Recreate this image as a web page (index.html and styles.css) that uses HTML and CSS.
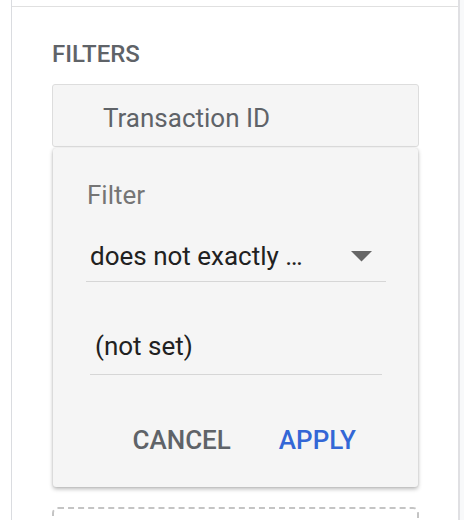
FILE: index.html
```html
<!DOCTYPE html>
<html>
<head>
<meta charset="utf-8">
<link rel="stylesheet" href="styles.css">
</head>
<body>
<div class="page">
  <div class="gutter"></div>
  <div class="panel">
    <div class="prev"></div>
    <div class="content">
      <div class="title">FILTERS</div>
      <div class="field">Transaction ID</div>
      <div class="card">
        <div class="label">Filter</div>
        <div class="select">
          <span class="select-text">does not exactly …</span>
          <svg class="caret" width="21" height="11" viewBox="0 0 21 11"><polygon points="0,0 21,0 10.5,10.5" fill="#666666"/></svg>
        </div>
        <div class="input">(not set)</div>
        <div class="actions">
          <span class="btn cancel">CANCEL</span>
          <span class="btn apply">APPLY</span>
        </div>
      </div>
      <div class="dashed"></div>
    </div>
  </div>
  <div class="side"></div>
</div>
</body>
</html>
```
FILE: styles.css
```css
html, body {
  margin: 0;
  padding: 0;
  background: #ffffff;
  font-family: Roboto, "Noto Sans", Arial, sans-serif;
  overflow: hidden;
}
.page {
  display: flex;
  height: 520px;
  overflow: hidden;
}
.gutter {
  width: 11px;
  flex: none;
  background: #ffffff;
}
.panel {
  width: 446px;
  flex: none;
  border-left: 1px solid #dadce0;
  border-right: 2px solid #e0e0e3;
  display: flex;
  flex-direction: column;
}
.side {
  flex: 1;
  background: #f8f9fa;
}
.prev {
  flex: none;
  height: 6px;
  border-bottom: 1px solid #e0e0e0;
}
.content {
  flex: none;
  padding: 33px 39px 0 40px;
  display: flex;
  flex-direction: column;
}
.title {
  font-size: 24px;
  font-weight: 500;
  line-height: 28px;
  color: #5f6368;
}
.field {
  margin-top: 16px;
  height: 63px;
  box-sizing: border-box;
  border: 1px solid #dddddd;
  border-radius: 3px;
  background: #f5f5f5;
  padding: 18px 0 0 50px;
  font-size: 26px;
  line-height: 30px;
  color: #5f6368;
}
.card {
  margin: 1px 1px 0 1px;
  background: #f5f5f5;
  border-radius: 3px;
  box-shadow: 0 2px 4px rgba(0,0,0,0.28), 0 0 2px rgba(0,0,0,0.12);
  padding: 32px 32px 32px 0;
  display: flex;
  flex-direction: column;
}
.label {
  margin-left: 34px;
  font-size: 26px;
  line-height: 30px;
  color: #757575;
}
.select {
  margin: 31px 0 0 33px;
  width: 300px;
  box-sizing: border-box;
  border-bottom: 1px solid #d6d6d6;
  padding: 0 14px 10px 4px;
  display: flex;
  align-items: center;
  justify-content: space-between;
}
.select-text {
  font-size: 26px;
  line-height: 30px;
  color: #212121;
}
.caret {
  display: block;
}
.input {
  margin: 49px 0 0 37px;
  width: 292px;
  box-sizing: border-box;
  border-bottom: 1px solid #d6d6d6;
  padding: 0 0 13px 5px;
  font-size: 26px;
  line-height: 30px;
  color: #212121;
}
.actions {
  margin-top: 50px;
  display: flex;
  justify-content: flex-end;
  padding-right: 6px;
}
.btn {
  padding: 0 24px;
  font-size: 26px;
  font-weight: 500;
  line-height: 30px;
}
.cancel {
  color: #5f6368;
}
.apply {
  color: #3367d6;
}
.dashed {
  margin-top: 20px;
  height: 60px;
  border: 2px dashed #c4c4c4;
  border-radius: 6px;
}
```
